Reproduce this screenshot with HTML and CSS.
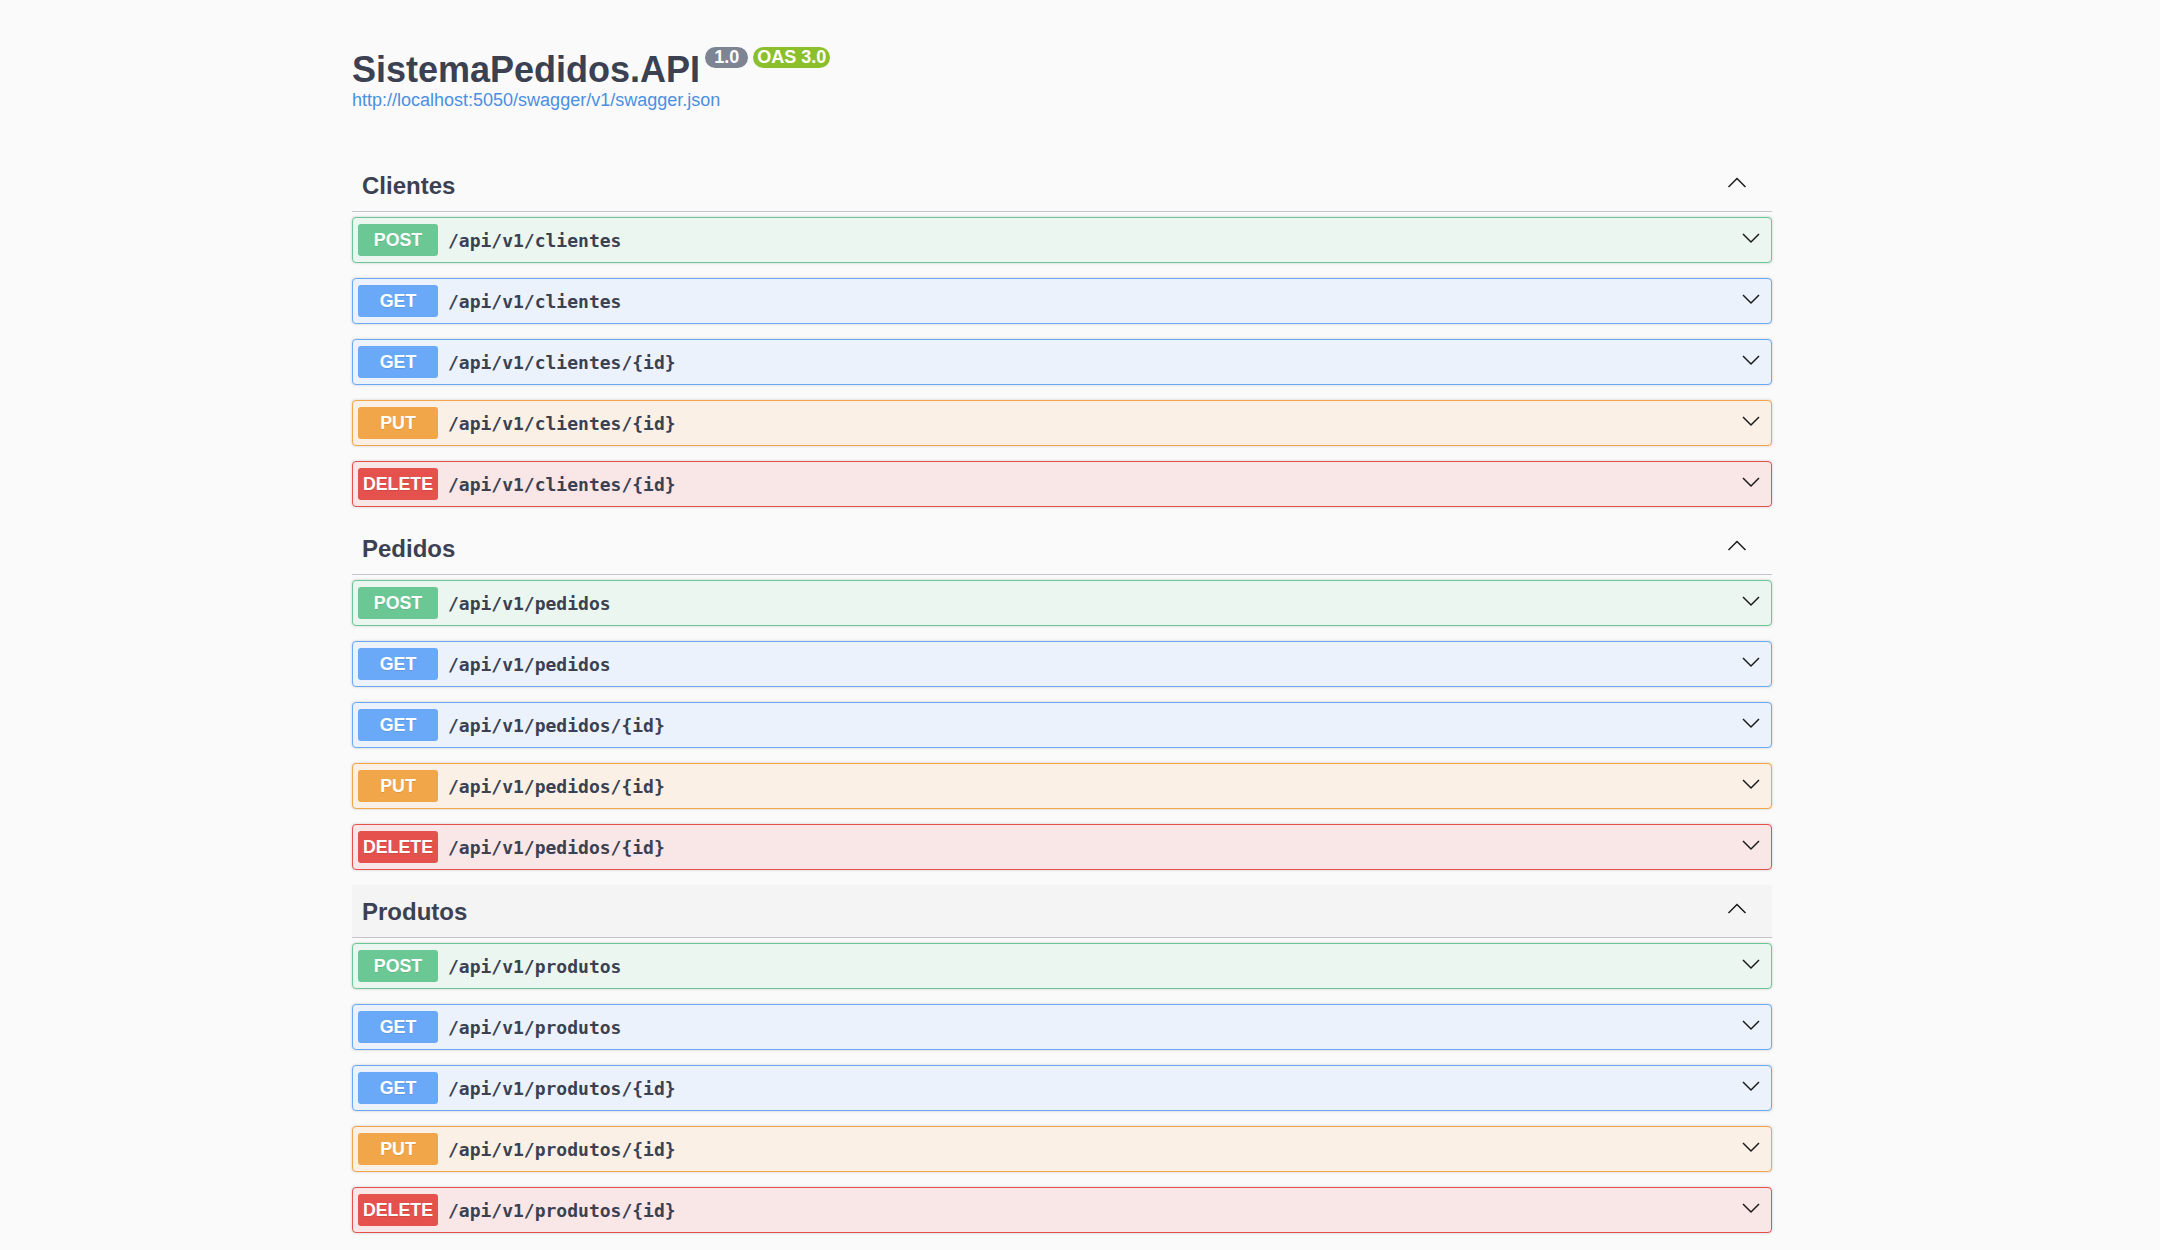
FILE: index.html
```html
<!DOCTYPE html>
<html lang="pt">
<head>
<meta charset="utf-8">
<title>SistemaPedidos.API</title>
<link rel="stylesheet" href="styles.css">
</head>
<body>
<svg class="sprite" aria-hidden="true">
  <symbol id="arrow-up" viewBox="0 0 20 20"><polyline points="1.5,12 10,3.5 18.5,12" fill="none" stroke="#1b1b1b" stroke-width="1.5"/></symbol>
  <symbol id="arrow-down" viewBox="0 0 20 20"><polyline points="2,4 10,12 18,4" fill="none" stroke="#1b1b1b" stroke-width="1.5"/></symbol>
</svg>
<div class="page">
  <div class="info">
    <h2 class="title">SistemaPedidos.API<span class="badge"> 1.0 </span><span class="badge badge-oas">OAS 3.0</span></h2>
    <a class="spec-link" href="#">http://localhost:5050/swagger/v1/swagger.json</a>
  </div>

  <section class="tag-section">
    <h3 class="tag"><span class="tag-name">Clientes</span><svg class="arrow arrow-tag"><use href="#arrow-up"/></svg></h3>
    <div class="op op-post"><span class="method">POST</span><span class="path">/api/v1/clientes</span><svg class="arrow"><use href="#arrow-down"/></svg></div>
    <div class="op op-get"><span class="method">GET</span><span class="path">/api/v1/clientes</span><svg class="arrow"><use href="#arrow-down"/></svg></div>
    <div class="op op-get"><span class="method">GET</span><span class="path">/api/v1/clientes/{id}</span><svg class="arrow"><use href="#arrow-down"/></svg></div>
    <div class="op op-put"><span class="method">PUT</span><span class="path">/api/v1/clientes/{id}</span><svg class="arrow"><use href="#arrow-down"/></svg></div>
    <div class="op op-delete"><span class="method">DELETE</span><span class="path">/api/v1/clientes/{id}</span><svg class="arrow"><use href="#arrow-down"/></svg></div>
  </section>

  <section class="tag-section">
    <h3 class="tag"><span class="tag-name">Pedidos</span><svg class="arrow arrow-tag"><use href="#arrow-up"/></svg></h3>
    <div class="op op-post"><span class="method">POST</span><span class="path">/api/v1/pedidos</span><svg class="arrow"><use href="#arrow-down"/></svg></div>
    <div class="op op-get"><span class="method">GET</span><span class="path">/api/v1/pedidos</span><svg class="arrow"><use href="#arrow-down"/></svg></div>
    <div class="op op-get"><span class="method">GET</span><span class="path">/api/v1/pedidos/{id}</span><svg class="arrow"><use href="#arrow-down"/></svg></div>
    <div class="op op-put"><span class="method">PUT</span><span class="path">/api/v1/pedidos/{id}</span><svg class="arrow"><use href="#arrow-down"/></svg></div>
    <div class="op op-delete"><span class="method">DELETE</span><span class="path">/api/v1/pedidos/{id}</span><svg class="arrow"><use href="#arrow-down"/></svg></div>
  </section>

  <section class="tag-section">
    <h3 class="tag tag-hover"><span class="tag-name">Produtos</span><svg class="arrow arrow-tag"><use href="#arrow-up"/></svg></h3>
    <div class="op op-post"><span class="method">POST</span><span class="path">/api/v1/produtos</span><svg class="arrow"><use href="#arrow-down"/></svg></div>
    <div class="op op-get"><span class="method">GET</span><span class="path">/api/v1/produtos</span><svg class="arrow"><use href="#arrow-down"/></svg></div>
    <div class="op op-get"><span class="method">GET</span><span class="path">/api/v1/produtos/{id}</span><svg class="arrow"><use href="#arrow-down"/></svg></div>
    <div class="op op-put"><span class="method">PUT</span><span class="path">/api/v1/produtos/{id}</span><svg class="arrow"><use href="#arrow-down"/></svg></div>
    <div class="op op-delete"><span class="method">DELETE</span><span class="path">/api/v1/produtos/{id}</span><svg class="arrow"><use href="#arrow-down"/></svg></div>
  </section>
</div>
</body>
</html>
```
FILE: styles.css
```css
* {
  box-sizing: border-box;
}

body {
  margin: 0;
  background: #fafafa;
  color: #3b4151;
  font-family: "Liberation Sans", Arial, sans-serif;
}

.sprite {
  display: none;
}

.page {
  width: 1420px;
  margin-left: 352px;
}

.info {
  padding-top: 49px;
  margin-bottom: 48px;
}

.title {
  margin: 0;
  font-size: 36px;
  line-height: 41px;
  font-weight: 700;
  color: #3b4151;
  white-space: nowrap;
}

.badge {
  display: inline-block;
  position: relative;
  top: -2px;
  vertical-align: top;
  margin-left: 5px;
  padding: 2px 4px;
  border-radius: 57px;
  background: #7d8492;
  color: #fff;
  font-size: 18px;
  line-height: 17px;
  font-weight: 700;
  white-space: pre;
}

.badge-oas {
  background: #8bbf2c;
}

.spec-link {
  display: block;
  font-size: 18px;
  line-height: 21px;
  color: #4a8fe2;
  text-decoration: none;
}

.tag-section {
  display: flex;
  flex-direction: column;
}

.tag {
  display: flex;
  align-items: center;
  height: 53px;
  margin: 0 0 5px;
  padding: 11px 20px 9px 10px;
  border-bottom: 1px solid #c4c5ca;
}

.tag-hover {
  background: #f4f4f4;
}

.tag-name {
  flex: 1;
  font-size: 24px;
  line-height: 32px;
  font-weight: 700;
  color: #3b4151;
}

.arrow {
  width: 20px;
  height: 20px;
  flex: none;
  margin-right: 5px;
}

.arrow-tag {
  margin-top: -2px;
}

.op {
  display: flex;
  align-items: center;
  height: 46px;
  margin-bottom: 15px;
  padding: 5px;
  border: 1px solid;
  border-radius: 4px;
  box-shadow: 0 0 3px rgba(0, 0, 0, 0.19);
}

.method {
  width: 80px;
  padding: 6px 0;
  border-radius: 3px;
  color: #fff;
  font-size: 17.8px;
  line-height: 20px;
  font-weight: 700;
  text-align: center;
  text-shadow: 0 1px 0 rgba(0, 0, 0, 0.1);
}

.path {
  flex: 1;
  padding: 0 10px;
  font-family: "DejaVu Sans Mono", "Liberation Mono", monospace;
  font-size: 18px;
  font-weight: 700;
  color: #3b4151;
}

.op-post {
  border-color: #6bc794;
  background: #ecf6f0;
}
.op-post .method {
  background: #6bc794;
}

.op-get {
  border-color: #6aa8f8;
  background: #ebf2fc;
}
.op-get .method {
  background: #6aa8f8;
}

.op-put {
  border-color: #f0a649;
  background: #faf0e6;
}
.op-put .method {
  background: #f0a649;
}

.op-delete {
  border-color: #e5514c;
  background: #f9e6e6;
}
.op-delete .method {
  background: #e5514c;
}
```
